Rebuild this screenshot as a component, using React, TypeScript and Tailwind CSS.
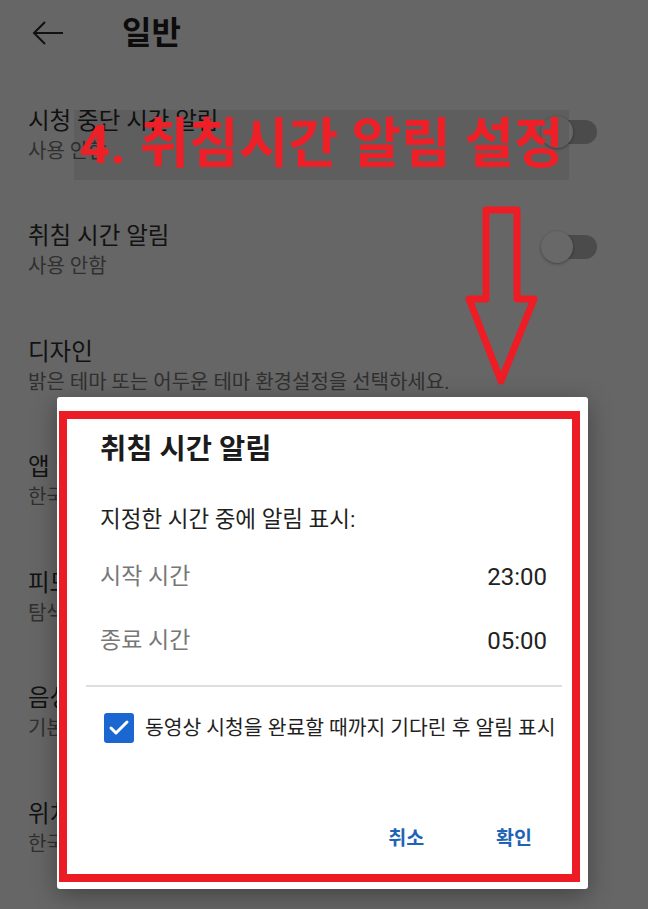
import { Check } from 'lucide-react';

const rows = [
  { title: '시청 중단 시간 알림', sub: '사용 안함', toggle: true },
  { title: '취침 시간 알림', sub: '사용 안함', toggle: true },
  { title: '디자인', sub: '밝은 테마 또는 어두운 테마 환경설정을 선택하세요.' },
  { title: '앱 언어', sub: '한국어' },
  { title: '피드백', sub: '탐색 기록에 따라 맞춤 추천' },
  { title: '음성 검색', sub: '기본 언어' },
  { title: '위치', sub: '한국' },
];

function Toggle() {
  return (
    <div className="relative mb-[8px] h-[32px] w-[56px]">
      <div className="absolute right-0 top-[4px] h-[24px] w-[46px] rounded-full bg-[#4b4b4b]" />
      <div className="absolute left-0 top-0 h-[32px] w-[32px] rounded-full bg-[#686868] shadow-[0_1px_3px_rgba(0,0,0,0.35)]" />
    </div>
  );
}

function SettingRow({ title, sub, toggle }: { title: string; sub: string; toggle?: boolean }) {
  return (
    <div className="flex h-[115.5px] items-center justify-between pl-[28px] pr-[51px]">
      <div className="flex flex-col">
        <span className="text-[23.5px] leading-[31px] text-[#121212]">{title}</span>
        <span className="text-[20px] leading-[29px] text-[#303030]">{sub}</span>
      </div>
      {toggle ? <Toggle /> : null}
    </div>
  );
}

function BedtimeDialog() {
  return (
    <div className="absolute left-[57px] top-[397px] flex h-[492px] w-[531px] flex-col rounded-[3px] bg-white shadow-[0_6px_24px_rgba(0,0,0,0.35)]">
      <h2 className="mt-[33px] px-[43px] text-[28.5px] font-bold leading-[40px] text-[#1c1c1c]">취침 시간 알림</h2>
      <p className="mt-[34px] px-[43px] text-[22.5px] leading-[30px] text-[#1f1f1f]">지정한 시간 중에 알림 표시:</p>

      <div className="mt-[11px] flex h-[64px] items-center justify-between pl-[43px] pr-[41px]">
        <span className="text-[23px] text-[#777]">시작 시간</span>
        <span className="text-[24px] text-[#222]">23:00</span>
      </div>
      <div className="flex h-[64px] items-center justify-between pl-[43px] pr-[41px]">
        <span className="text-[23px] text-[#777]">종료 시간</span>
        <span className="text-[24px] text-[#222]">05:00</span>
      </div>

      <div className="ml-[29px] mr-[26px] mt-[12px] h-[2px] bg-[#dedede]" />

      <label className="mt-[14px] flex h-[54px] items-center gap-[11px] pl-[47px]">
        <span className="flex h-[30px] w-[30px] shrink-0 items-center justify-center rounded-[3px] bg-[#1a67d2]">
          <Check className="h-[24px] w-[24px] text-white" strokeWidth={3} />
        </span>
        <span className="whitespace-nowrap text-[20.4px] text-[#1f1f1f]">동영상 시청을 완료할 때까지 기다린 후 알림 표시</span>
      </label>

      <div className="mt-[60px] flex h-[48px] items-center justify-end gap-[72px] pr-[56px] text-[19.5px] font-bold text-[#1f63b6]">
        <button>취소</button>
        <button>확인</button>
      </div>

      {/* red highlight frame drawn over the dialog */}
      <div className="pointer-events-none absolute left-[2px] top-[14px] h-[471px] w-[521px] border-[8px] border-[#ed1c24]" />
    </div>
  );
}

export default function App() {
  return (
    <div className="relative h-[909px] w-[648px] overflow-hidden bg-[#666666] font-['Roboto','Noto_Sans_CJK_KR',sans-serif]">
      <header className="flex h-[66px] items-center">
        <svg className="ml-[32px] h-[24px] w-[32px]" viewBox="0 0 32 24" fill="none" stroke="#111" strokeWidth="2">
          <path d="M31 12H2M13 1L2 12l11 11" />
        </svg>
        <h1 className="ml-[58px] text-[32px] font-bold text-[#0c0c0c]">일반</h1>
      </header>

      <div className="mt-[12px]">
        {rows.map((r) => (
          <SettingRow key={r.title} {...r} />
        ))}
      </div>

      {/* caption banner */}
      <div className="absolute left-[74px] top-[110px] flex h-[70px] w-[495px] items-center justify-center bg-[rgba(0,0,0,0.08)]">
        <span className="whitespace-nowrap text-[54px] font-bold leading-none text-[#ee1f26]">4. 취침시간 알림 설정</span>
      </div>

      <svg className="absolute left-[460px] top-[200px]" width="84" height="192" viewBox="460 200 84 192" fill="none">
        <path
          d="M486 210H517V299H534L501 381L469 299H486Z"
          stroke="#ee1c25"
          strokeWidth="7"
          strokeLinejoin="round"
        />
      </svg>

      <BedtimeDialog />
    </div>
  );
}
